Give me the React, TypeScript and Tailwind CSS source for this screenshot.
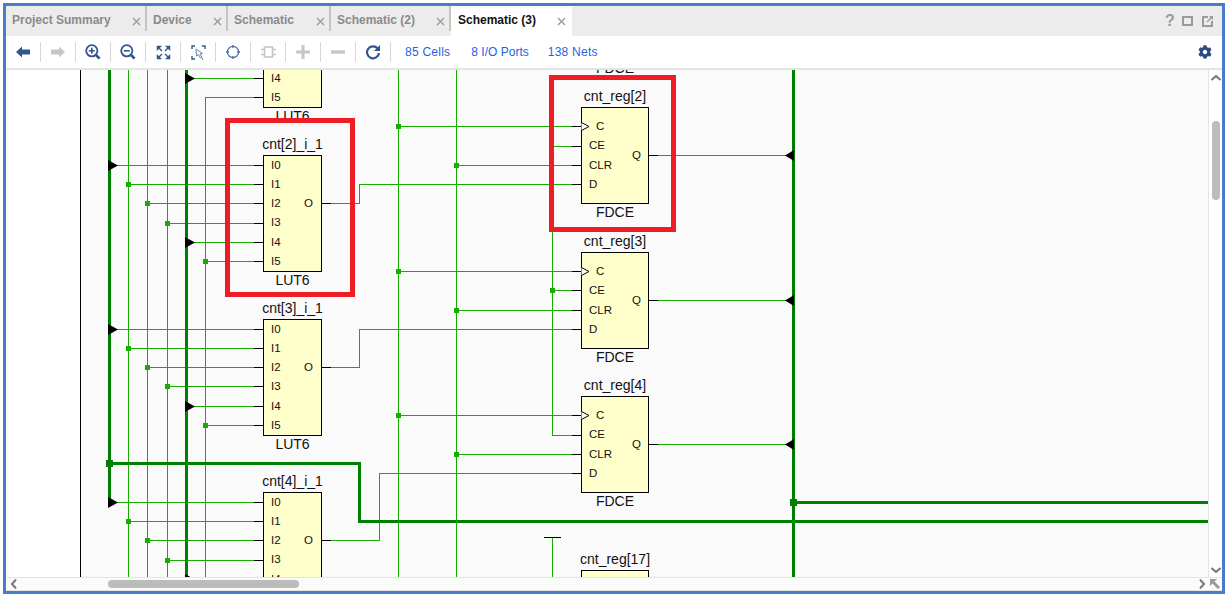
import React from "react";
import { FaCog } from "react-icons/fa";

const THIN = "#18ac00";
const THICK = "#008000";
const DARK = "#31558f";
const OFF = "#c6c6c6";

const p = (n: number) => n + 0.5;

function H({ y, x1, x2, c = THIN }: { y: number; x1: number; x2: number; c?: string }) {
  return <line x1={x1} x2={x2} y1={p(y)} y2={p(y)} stroke={c} strokeWidth={1} />;
}
function V({ x, y1, y2, c = THIN }: { x: number; y1: number; y2: number; c?: string }) {
  return <line x1={p(x)} x2={p(x)} y1={y1} y2={y2} stroke={c} strokeWidth={1} />;
}
function Dot({ x, y }: { x: number; y: number }) {
  return <rect x={x - 2} y={y - 2} width={5} height={5} fill={THIN} />;
}
function TriR({ x, y }: { x: number; y: number }) {
  return <polygon points={`${x},${y - 5} ${x + 10},${y + 0.5} ${x},${y + 6}`} fill="#000" />;
}
function TriL({ x, y }: { x: number; y: number }) {
  return <polygon points={`${x},${y + 0.5} ${x + 9},${y - 5} ${x + 9},${y + 6}`} fill="#000" />;
}

const lutRows = [
  [78 - 87, 78 - 68, 78 - 49, 78 - 19, 78, 97],
  [165, 184, 203, 223, 242, 261],
  [329, 348, 367, 386, 406, 425],
  [502, 521, 540, 560, 579, 598],
];
const srcX = [109, 128, 147, 167, 186, 205];

const ffRows = [
  { c: 126, ce: 146, ceText: 145, clr: 165, d: 184, q: 155 },
  { c: 271, ce: 290, ceText: 290, clr: 310, d: 329, q: 300 },
  { c: 415, ce: 435, ceText: 434, clr: 454, d: 473, q: 444 },
];

function Wires() {
  return (
    <svg className="absolute left-0 top-0" width={1232} height={596} shapeRendering="crispEdges">
      <rect x={6} y={70} width={74} height={507} fill="#ffffff" />
      <V x={80} y1={70} y2={577} c="#000" />

      {/* shared vertical nets */}
      <V x={128} y1={70} y2={577} />
      <V x={147} y1={70} y2={577} />
      <V x={167} y1={70} y2={577} />
      <V x={205} y1={97} y2={577} />
      <V x={398} y1={70} y2={577} />
      <V x={456} y1={70} y2={577} />
      <V x={552} y1={146} y2={435} />
      <V x={552} y1={537} y2={577} />
      <H y={537} x1={544} x2={561} c="#000" />

      {/* LUT inputs */}
      {lutRows.map((rows, i) =>
        rows.map((y, j) => {
          if (i === 0 && j < 4) return null;
          if (y > 577) return null;
          const bus = j === 0 || j === 4;
          return (
            <g key={`${i}-${j}`}>
              <H y={y} x1={srcX[j] + (bus ? 8 : 0)} x2={254} />
              <H y={y} x1={254} x2={263} c="#000" />
              {!bus && !(i === 0 && j === 5) && <Dot x={srcX[j]} y={y} />}
            </g>
          );
        })
      )}

      {/* LUT outputs to FF D pins */}
      <H y={203} x1={322} x2={331} c="#000" />
      <path d="M331 203.5H359.5V184.5H572" fill="none" stroke={THIN} />
      <H y={367} x1={322} x2={331} c="#000" />
      <path d="M331 367.5H359.5V329.5H572" fill="none" stroke={THIN} />
      <H y={540} x1={322} x2={331} c="#000" />
      <path d="M331 540.5H379.5V473.5H572" fill="none" stroke={THIN} />

      {/* FF pins */}
      {ffRows.map((r, i) => (
        <g key={i}>
          <H y={r.c} x1={398} x2={572} />
          <Dot x={398} y={r.c} />
          <H y={r.clr} x1={456} x2={572} />
          <Dot x={456} y={r.clr} />
          <H y={r.ce} x1={552} x2={572} />
          {i === 1 && <Dot x={552} y={r.ce} />}
          <H y={r.d} x1={572} x2={581} c="#000" />
          <H y={r.c} x1={572} x2={581} c="#000" />
          <H y={r.ce} x1={572} x2={581} c="#000" />
          <H y={r.clr} x1={572} x2={581} c="#000" />
          <H y={r.q} x1={649} x2={658} c="#000" />
          <H y={r.q} x1={658} x2={786} />
        </g>
      ))}

      {/* thick buses */}
      <g stroke={THICK} strokeWidth={3} fill="none">
        <path d="M109.5 70V502" />
        <path d="M186.5 70V577" />
        <path d="M793.5 70V577" />
        <path d="M109.5 463.5H359.5V521.5H1208" />
        <path d="M793.5 502.5H1208" />
      </g>
      <rect x={106} y={460} width={7} height={7} fill={THICK} />
      <rect x={790} y={499} width={7} height={7} fill={THICK} />

      <g shapeRendering="auto">
        {lutRows.map((rows, i) =>
          rows.map((y, j) => {
            if (i === 0 && j < 4) return null;
            if (j !== 0 && j !== 4) return null;
            if (y > 590) return null;
            return <TriR key={`t${i}-${j}`} x={srcX[j] - 1} y={y} />;
          })
        )}
        {ffRows.map((r) => (
          <TriL key={r.q} x={785} y={r.q} />
        ))}
      </g>
    </svg>
  );
}

const font = "font-['Liberation_Sans',Arial,sans-serif]";

function Pin({ x, y, children }: { x: number; y: number; children: React.ReactNode }) {
  return (
    <span
      className="absolute -translate-y-1/2 text-[11.5px] leading-[12px] text-[#111]"
      style={{ left: x, top: y }}
    >
      {children}
    </span>
  );
}

function Cell({
  left,
  top,
  width,
  height,
  name,
  type,
  pins,
}: {
  left: number;
  top: number;
  width: number;
  height: number;
  name?: string;
  type: string;
  pins: [string, number, number][];
}) {
  return (
    <div
      className="absolute border border-black bg-[#ffffcc]"
      style={{ left, top, width, height }}
    >
      {name && (
        <div className="absolute bottom-full left-[-20px] right-[-20px] mb-[4px] text-center text-[14px] leading-4 text-[#111] whitespace-nowrap">
          {name}
        </div>
      )}
      {pins.map(([label, x, y]) => (
        <Pin key={label} x={x - left - 1} y={y - top - 1}>
          {label}
        </Pin>
      ))}
      <div className="absolute top-full left-0 right-0 mt-px text-center text-[14px] leading-4 text-[#111]">
        {type}
      </div>
    </div>
  );
}

function Lut({ top, name, rows }: { top: number; name?: string; rows: number[] }) {
  const labels = ["I0", "I1", "I2", "I3", "I4", "I5"];
  const pins: [string, number, number][] = [];
  labels.forEach((l, i) => {
    if (rows[i] > 70 && rows[i] < 585) {
      const y = rows[i] === 223 || rows[i] === 560 ? rows[i] - 1 : rows[i];
      pins.push([l, 271, y]);
    }
  });
  if (rows[2] > 70) pins.push(["O", 304, rows[2]]);
  return <Cell left={263} top={top} width={59} height={117} name={name} type="LUT6" pins={pins} />;
}

function Ff({ top, name, r }: { top: number; name: string; r?: (typeof ffRows)[number] }) {
  const pins: [string, number, number][] = r
    ? [
        ["C", 596, r.c],
        ["CE", 589, r.ceText],
        ["CLR", 589, r.clr],
        ["D", 589, r.d],
        ["Q", 632, r.q],
      ]
    : [];
  return (
    <>
      <Cell left={581} top={top} width={68} height={97} name={name} type="FDCE" pins={pins} />
      {r && (
        <svg className="absolute left-[581px]" style={{ top: r.c - 5 }} width={10} height={11}>
          <path d="M0.5 1.5L8 5.5L0.5 9.5" fill="#fff" stroke="#000" strokeWidth={1} />
        </svg>
      )}
    </>
  );
}

function Schematic() {
  return (
    <div className={`absolute left-[-6px] top-[-70px] h-[596px] w-[1232px] ${font}`}>
      <Wires />
      <Lut top={155 - 164} rows={lutRows[0]} />
      <Lut top={155} name="cnt[2]_i_1" rows={lutRows[1]} />
      <Lut top={319} name="cnt[3]_i_1" rows={lutRows[2]} />
      <Lut top={492} name="cnt[4]_i_1" rows={lutRows[3]} />
      <div className="absolute left-[581px] top-[60px] h-[16px] w-[68px] text-center text-[14px] leading-4 text-[#111]">
        FDCE
      </div>
      <Ff top={107} name="cnt_reg[2]" r={ffRows[0]} />
      <Ff top={252} name="cnt_reg[3]" r={ffRows[1]} />
      <Ff top={396} name="cnt_reg[4]" r={ffRows[2]} />
      <Ff top={570} name="cnt_reg[17]" />
      <div className="absolute left-[225px] top-[118px] h-[179px] w-[130px] border-[5px] border-[#ee1c25]" />
      <div className="absolute left-[549px] top-[75px] h-[157px] w-[127px] border-[5px] border-[#ee1c25]" />
    </div>
  );
}

function CloseX() {
  return (
    <svg width={9} height={9} viewBox="0 0 9 9" className="shrink-0">
      <path d="M1 1L8 8M8 1L1 8" stroke="#9a9a9a" strokeWidth={1.4} />
    </svg>
  );
}

function Tab({
  label,
  width,
  active,
}: {
  label: string;
  width: string;
  active?: boolean;
}) {
  return (
    <div
      className={`flex h-full items-center justify-between ${width} ${
        active ? "bg-white pl-[7px] pr-[6px]" : "pl-[6px]"
      }`}
    >
      <span
        className={`pb-[3px] text-[12px] font-bold whitespace-nowrap ${
          active ? "text-[#111]" : "text-[#8a8a8a]"
        }`}
      >
        {label}
      </span>
      {active ? (
        <CloseX />
      ) : (
        <div className="flex h-full items-center gap-[4px] pl-[2px]">
          <CloseX />
          <div className="mb-[5px] h-[25px] w-[2px] self-end bg-[#c4c4c4]" />
        </div>
      )}
    </div>
  );
}

const Back = ({ c, flip }: { c: string; flip?: boolean }) => (
  <svg width={16} height={12} viewBox="0 0 16 12" className={flip ? "-scale-x-100" : ""}>
    <path d="M1 6L7 .5V3.5H15V8.5H7V11.5Z" fill={c} />
  </svg>
);
const Zoom = ({ plus }: { plus?: boolean }) => (
  <svg width={16} height={16} viewBox="0 0 16 16" fill="none" stroke={DARK}>
    <circle cx={6.8} cy={6.8} r={5.6} strokeWidth={1.8} />
    <path d="M11 11L14.6 14.6" strokeWidth={2.6} />
    <path d={plus ? "M3.8 6.8H9.8M6.8 3.8V9.8" : "M3.8 6.8H9.8"} strokeWidth={1.6} />
  </svg>
);
const Fit = () => (
  <svg width={15} height={15} viewBox="0 0 15 15" fill={DARK} stroke={DARK}>
    <path d="M1 1H5.5L1 5.5Z M14 1H9.5L14 5.5Z M1 14H5.5L1 9.5Z M14 14H9.5L14 9.5Z" strokeWidth={0.5} />
    <path d="M2 2L6 6M13 2L9 6M2 13L6 9M13 13L9 9" strokeWidth={1.4} fill="none" />
  </svg>
);
const SelectIcon = () => (
  <svg width={15} height={15} viewBox="0 0 15 15" fill="none">
    <path d="M1 4V1H4M11 1H14V4M1 11V14H4M11 14H12" stroke={DARK} strokeWidth={1.4} />
    <path d="M5 4L5.5 11L7.5 9.5L9.5 13L11 12L9 9L11.5 8.5Z" fill="#fff" stroke="#6c80a5" strokeWidth={1} />
  </svg>
);
const Target = () => (
  <svg width={16} height={16} viewBox="0 0 16 16" fill="none" stroke="#5273a8">
    <circle cx={8} cy={8} r={5.6} strokeWidth={1.2} />
    <path d="M8 1V4M8 12V15M1 8H4M12 8H15" strokeWidth={1.4} />
  </svg>
);
const Chip = () => (
  <svg width={15} height={12} viewBox="0 0 15 12" fill="none" stroke={OFF} strokeWidth={1.6}>
    <rect x={3.5} y={1} width={8} height={10} />
    <path d="M0 3.5H3M0 8.5H3M12 3.5H15M12 8.5H15" />
  </svg>
);
const Plus = () => (
  <svg width={14} height={14} viewBox="0 0 14 14">
    <path d="M0 7H14M7 0V14" stroke={OFF} strokeWidth={3} />
  </svg>
);
const Minus = () => (
  <svg width={14} height={14} viewBox="0 0 14 14">
    <path d="M0 7H14" stroke={OFF} strokeWidth={3.4} />
  </svg>
);
const Refresh = () => (
  <svg width={16} height={16} viewBox="0 0 16 16" fill="none">
    <path d="M12.6 4.4A6 6 0 1 0 14 9" stroke={DARK} strokeWidth={2.2} />
    <path d="M15 1V7H9Z" fill={DARK} />
  </svg>
);

function Tool({ children }: { children: React.ReactNode }) {
  return (
    <div className="flex h-full w-[35px] items-center">
      <div className="flex flex-1 items-center justify-center">{children}</div>
      <div className="h-[20px] w-px bg-[#d6d6d6]" />
    </div>
  );
}

const Chev = ({ d, c = "#777777" }: { d: string; c?: string }) => (
  <svg width={10} height={10} viewBox="0 0 10 10" fill="none" className="shrink-0">
    <path d={d} stroke={c} strokeWidth={2} />
  </svg>
);

export default function App() {
  return (
    <div className={`h-[596px] w-[1232px] bg-white pb-[2px] pl-[3px] pr-[7px] pt-[3px] ${font}`}>
      <div className="flex h-full w-full flex-col border-[3px] border-[#4a7ccb]">
        {/* tabs */}
        <div className="flex h-[30px] shrink-0 items-center bg-[#ececec]">
          <Tab label="Project Summary" width="w-[141px]" />
          <Tab label="Device" width="w-[81px]" />
          <Tab label="Schematic" width="w-[103px]" />
          <Tab label="Schematic (2)" width="w-[120px]" />
          <Tab label="Schematic (3)" width="w-[121px]" active />
          <div className="ml-auto flex items-center gap-[8px] pr-[9px]">
            <span className="-mr-[2px] w-[12px] text-center text-[16px] font-bold leading-none text-[#9a9a9a]">?</span>
            <div className="h-[10px] w-[11px] border-2 border-[#9a9a9a]" />
            <svg width={11} height={11} viewBox="0 0 11 11" fill="none" className="ml-[1px]">
              <path d="M6 1H1V10H10V5" stroke="#9a9a9a" strokeWidth={2} />
              <path d="M5 6L10 1M7.5 .5H10.5V3.5" stroke="#9a9a9a" strokeWidth={1.4} />
            </svg>
          </div>
        </div>

        {/* toolbar */}
        <div className="flex h-[34px] shrink-0 items-center border-b-2 border-[#e4e4e4] bg-white">
          <Tool><Back c={DARK} /></Tool>
          <Tool><Back c={OFF} flip /></Tool>
          <Tool><Zoom plus /></Tool>
          <Tool><Zoom /></Tool>
          <Tool><Fit /></Tool>
          <Tool><SelectIcon /></Tool>
          <Tool><Target /></Tool>
          <Tool><Chip /></Tool>
          <Tool><Plus /></Tool>
          <Tool><Minus /></Tool>
          <Tool><Refresh /></Tool>
          <div className="ml-[14px] flex gap-5 text-[12px] text-[#1f63e0]">
            <span className="mr-px tracking-[0.25px]">85 Cells</span>
            <span className="-mr-px">8 I/O Ports</span>
            <span className="tracking-[0.25px]">138 Nets</span>
          </div>
          <FaCog className="ml-auto mr-[10px] text-[#2c4a85]" size={14} />
        </div>

        {/* canvas + vertical scrollbar */}
        <div className="flex min-h-0 flex-1">
          <div className="relative flex-1 overflow-hidden bg-[#fafafa]">
            <Schematic />
          </div>
          <div className="flex w-[14px] shrink-0 flex-col items-center border-l border-[#e4e4e4] bg-white pb-[2px] pt-[3px]">
            <Chev d="M.5 7L5 3L9.5 7" />
            <div className="mt-[38px] h-[79px] w-2 rounded-full bg-[#bcbcbc]" />
            <div className="mt-auto">
              <Chev d="M.5 3L5 7L9.5 3" />
            </div>
          </div>
        </div>

        {/* horizontal scrollbar */}
        <div className="flex h-[14px] shrink-0 items-center border-y border-[#e4e4e4] bg-[#fbfbfb]">
          <div className="ml-[3px]">
            <Chev d="M7 .5L3 5L7 9.5" />
          </div>
          <div className="ml-[89px] h-2 w-[191px] rounded-full bg-[#bcbcbc]" />
          <div className="ml-auto flex items-center gap-[3px] pr-[2px]">
            <Chev d="M3 .5L7 5L3 9.5" />
            <svg width={10} height={10} viewBox="0 0 10 10">
              <path d="M0 0H7L0 7Z" fill="#9a9a9a" />
              <path d="M3 3L9 9" stroke="#9a9a9a" strokeWidth={3} />
            </svg>
          </div>
        </div>
      </div>
    </div>
  );
}
